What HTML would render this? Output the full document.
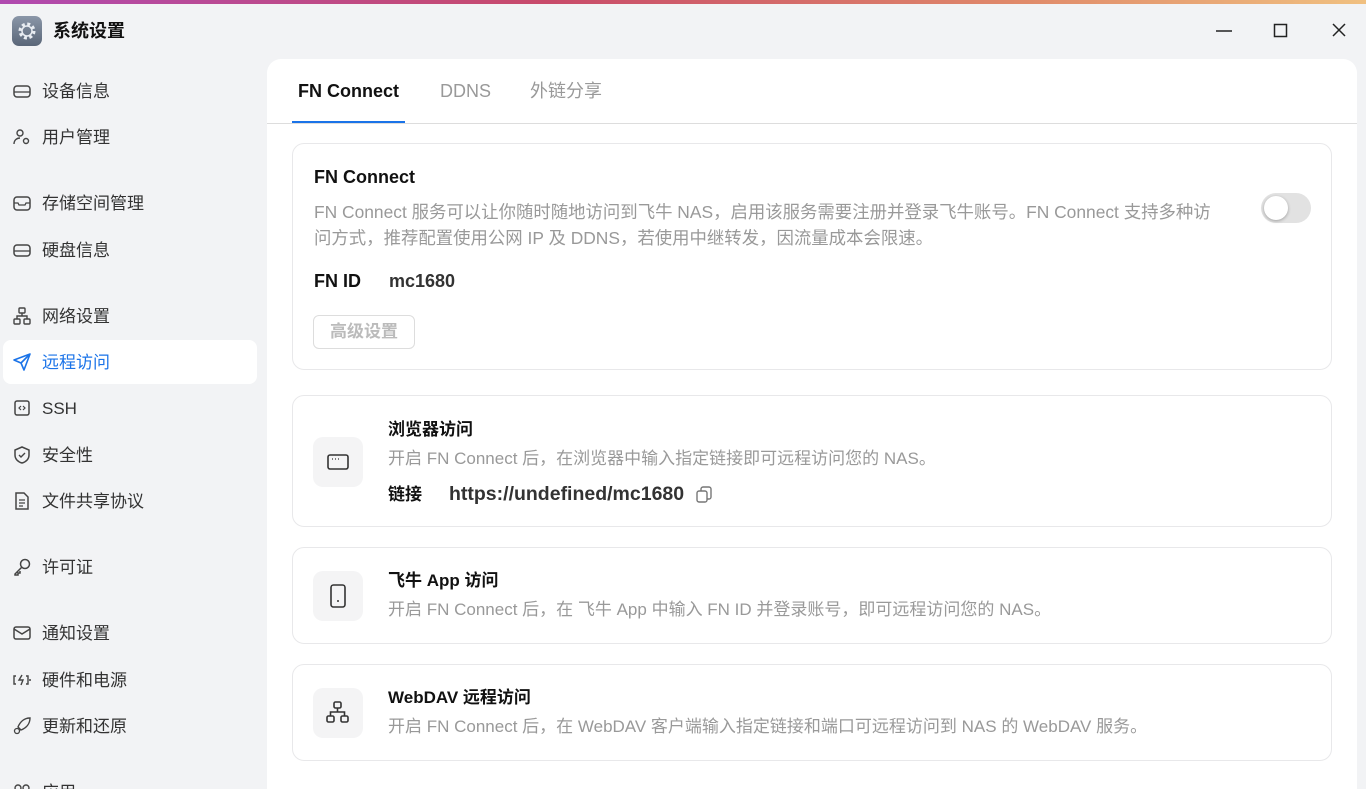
<!DOCTYPE html>
<html><head><meta charset="utf-8"><style>
*{margin:0;padding:0;box-sizing:border-box}
html,body{width:1366px;height:789px;overflow:hidden}
body{background:#f2f3f5;font-family:"Liberation Sans","Noto Sans CJK SC",sans-serif;position:relative;color:#222;line-height:22px}
.top{position:absolute;left:0;top:0;width:1366px;height:4px;background:linear-gradient(90deg,#b04ab0,#c84a6a 40%,#e08a6a 75%,#f0c080)}
.logo{position:absolute;left:12px;top:16px;width:30px;height:30px;border-radius:7px;background:linear-gradient(#8a96a8,#5a6678)}
.title{position:absolute;left:53px;top:20px;font-size:18px;font-weight:bold;color:#111}
.wc{position:absolute;top:22px}
.item{position:absolute;left:3px;width:254px;height:44px;display:flex;align-items:center;font-size:17px;color:#333}
.item svg{position:absolute;left:10px}
.item span{position:absolute;left:39px;top:12px}
.item.act{background:#fff;border-radius:8px;color:#1a73e8}
.panel{position:absolute;left:267px;top:59px;width:1090px;height:730px;background:#fff;border-radius:14px 14px 0 0}
.tab{position:absolute;top:80px;font-size:18px;color:#999}
.card{position:absolute;left:292px;width:1040px;border:1px solid #e8e8ea;border-radius:12px;background:#fff}
.ib{position:absolute;left:20px;width:50px;height:50px;border-radius:10px;background:#f4f4f5;display:flex;align-items:center;justify-content:center}
.ct{position:absolute;left:95px;font-size:17px;font-weight:bold;color:#111}
.cd{position:absolute;left:95px;font-size:17px;color:#999;white-space:nowrap}
</style></head><body>
<div class="top"></div>
<div class="logo"><svg width="30" height="30" viewBox="0 0 30 30"><circle cx="15" cy="15" r="7" fill="none" stroke="#e8ecf2" stroke-width="3" stroke-dasharray="3 2.5"/><circle cx="15" cy="15" r="5" fill="none" stroke="#e8ecf2" stroke-width="1.5"/></svg></div>
<div class="title">系统设置</div>
<svg class="wc" style="left:1216px" width="16" height="16"><path d="M0 9h16" stroke="#222" stroke-width="1.5"/></svg>
<svg class="wc" style="left:1273px" width="16" height="16"><rect x="1.5" y="2.5" width="12" height="12" fill="none" stroke="#222" stroke-width="1.5"/></svg>
<svg class="wc" style="left:1331px" width="16" height="16"><path d="M2 2l12 12M14 2L2 14" stroke="#222" stroke-width="1.5"/></svg>

<div class="item" style="top:69px"><svg width="18" height="18"><rect x="1" y="4" width="16" height="11" rx="3" fill="none" stroke="#444" stroke-width="1.5"/><path d="M1 10h16" stroke="#444" stroke-width="1.3"/></svg><span>设备信息</span></div>
<div class="item" style="top:115px"><svg width="18" height="18"><circle cx="7" cy="5" r="3" fill="none" stroke="#444" stroke-width="1.4"/><path d="M1 16c0-4 3-6 6-6" fill="none" stroke="#444" stroke-width="1.4"/><circle cx="13" cy="13" r="2.5" fill="none" stroke="#444" stroke-width="1.4"/></svg><span>用户管理</span></div>
<div class="item" style="top:181px"><svg width="18" height="18"><rect x="1" y="3" width="16" height="13" rx="3" fill="none" stroke="#444" stroke-width="1.5"/><path d="M1 9h4l1 2h6l1-2h4" fill="none" stroke="#444" stroke-width="1.3"/></svg><span>存储空间管理</span></div>
<div class="item" style="top:228px"><svg width="18" height="18"><rect x="1" y="4" width="16" height="11" rx="3" fill="none" stroke="#444" stroke-width="1.5"/><path d="M1 10h16" stroke="#444" stroke-width="1.3"/></svg><span>硬盘信息</span></div>
<div class="item" style="top:294px"><svg width="18" height="18"><rect x="6" y="1" width="6" height="5" rx="1" fill="none" stroke="#444" stroke-width="1.4"/><rect x="1" y="12" width="6" height="5" rx="1" fill="none" stroke="#444" stroke-width="1.4"/><rect x="11" y="12" width="6" height="5" rx="1" fill="none" stroke="#444" stroke-width="1.4"/><path d="M9 6v3M4 12V9h10v3" fill="none" stroke="#444" stroke-width="1.4"/></svg><span>网络设置</span></div>
<div class="item act" style="top:340px"><svg width="18" height="18"><path d="M17 1L1 7l7 3 3 7z M8 10l9-9" fill="none" stroke="#1a73e8" stroke-width="1.6" stroke-linejoin="round"/></svg><span>远程访问</span></div>
<div class="item" style="top:386px"><svg width="18" height="18"><rect x="2" y="2" width="14" height="14" rx="2" fill="none" stroke="#444" stroke-width="1.5"/><path d="M8 7l-2 2 2 2M10 7l2 2-2 2" fill="none" stroke="#444" stroke-width="1.2"/></svg><span>SSH</span></div>
<div class="item" style="top:433px"><svg width="18" height="18"><path d="M9 1l7 3v5c0 4-3 7-7 8-4-1-7-4-7-8V4z" fill="none" stroke="#444" stroke-width="1.5"/><path d="M6 9l2 2 4-4" fill="none" stroke="#444" stroke-width="1.4"/></svg><span>安全性</span></div>
<div class="item" style="top:479px"><svg width="18" height="18"><path d="M3 1h8l4 4v12H3z" fill="none" stroke="#444" stroke-width="1.5"/><path d="M6 8h6M6 11h6M6 14h4" stroke="#444" stroke-width="1.3"/></svg><span>文件共享协议</span></div>
<div class="item" style="top:545px"><svg width="18" height="18"><circle cx="12" cy="6" r="4.5" fill="none" stroke="#444" stroke-width="1.5"/><path d="M9 9l-7 7v1h3v-2h2v-2" fill="none" stroke="#444" stroke-width="1.5"/></svg><span>许可证</span></div>
<div class="item" style="top:611px"><svg width="18" height="18"><rect x="1" y="3" width="16" height="12" rx="2" fill="none" stroke="#444" stroke-width="1.5"/><path d="M1 5l8 5 8-5" fill="none" stroke="#444" stroke-width="1.5"/></svg><span>通知设置</span></div>
<div class="item" style="top:658px"><svg width="18" height="18"><path d="M3 5H1v8h2M13 5h2v8h-2M9 4l-3 5h4l-2 5" fill="none" stroke="#444" stroke-width="1.4"/><circle cx="17" cy="9" r="1" fill="#444"/></svg><span>硬件和电源</span></div>
<div class="item" style="top:704px"><svg width="18" height="18"><path d="M17 1c-6 0-10 4-12 9l3 3c5-2 9-6 9-12z" fill="none" stroke="#444" stroke-width="1.4"/><circle cx="4" cy="14" r="2.5" fill="none" stroke="#444" stroke-width="1.3"/></svg><span>更新和还原</span></div>
<div class="item" style="top:770px"><svg width="18" height="18"><circle cx="5" cy="5" r="3" fill="none" stroke="#444" stroke-width="1.4"/><circle cx="13" cy="5" r="3" fill="none" stroke="#444" stroke-width="1.4"/></svg><span>应用</span></div>

<div class="panel"></div>
<div class="tab" style="left:298px;color:#111;font-weight:bold">FN Connect</div>
<div class="tab" style="left:440px">DDNS</div>
<div class="tab" style="left:530px">外链分享</div>
<div style="position:absolute;left:267px;top:123px;width:1090px;height:1px;background:#ddd"></div>
<div style="position:absolute;left:292px;top:121px;width:113px;height:2px;background:#1a73e8"></div>

<div class="card" style="top:143px;height:227px">
 <div style="position:absolute;left:21px;top:22px;font-size:18px;font-weight:bold;color:#111">FN Connect</div>
 <div style="position:absolute;left:21px;top:55px;width:912px;font-size:17.4px;line-height:26px;color:#999">FN Connect 服务可以让你随时随地访问到飞牛 NAS，启用该服务需要注册并登录飞牛账号。FN Connect 支持多种访问方式，推荐配置使用公网 IP 及 DDNS，若使用中继转发，因流量成本会限速。</div>
 <div style="position:absolute;left:21px;top:126px;font-size:18px;font-weight:bold;color:#111">FN ID</div>
 <div style="position:absolute;left:96px;top:126px;font-size:18px;font-weight:bold;color:#333">mc1680</div>
 <div style="position:absolute;left:20px;top:171px;width:102px;height:34px;border:1px solid #ddd;border-radius:6px;font-size:17px;color:#bbb;text-align:center;line-height:32px;font-weight:bold">高级设置</div>
 <div style="position:absolute;left:968px;top:49px;width:50px;height:30px;border-radius:15px;background:#e2e2e2"><div style="position:absolute;left:3px;top:3px;width:24px;height:24px;border-radius:12px;background:#fff;box-shadow:0 1px 3px rgba(0,0,0,.3)"></div></div>
</div>

<div class="card" style="top:395px;height:132px">
 <div class="ib" style="top:41px"><svg width="22" height="18"><rect x="1" y="2" width="20" height="14" rx="2" fill="none" stroke="#333" stroke-width="1.6"/><path d="M5 6h1M8 6h1M11 6h1" stroke="#333" stroke-width="1.2"/></svg></div>
 <div class="ct" style="top:23px">浏览器访问</div>
 <div class="cd" style="top:52px">开启 FN Connect 后，在浏览器中输入指定链接即可远程访问您的 NAS。</div>
 <div class="ct" style="top:88px">链接</div>
 <div class="ct" style="left:156px;top:87px;color:#333;font-size:19.5px">https://undefined/mc1680</div>
 <svg style="position:absolute;left:403px;top:90px" width="16" height="18"><rect x="1" y="5" width="10" height="11" rx="2" fill="none" stroke="#777" stroke-width="1.4"/><path d="M5 5V3a2 2 0 012-2h6a2 2 0 012 2v8a2 2 0 01-2 2h-2" fill="none" stroke="#777" stroke-width="1.4"/></svg>
</div>

<div class="card" style="top:547px;height:97px">
 <div class="ib" style="top:23px"><svg width="16" height="24"><rect x="1" y="1" width="14" height="22" rx="2.5" fill="none" stroke="#333" stroke-width="1.6"/><circle cx="8" cy="17" r="1" fill="#333"/></svg></div>
 <div class="ct" style="top:22px">飞牛 App 访问</div>
 <div class="cd" style="top:51px">开启 FN Connect 后，在 飞牛 App 中输入 FN ID 并登录账号，即可远程访问您的 NAS。</div>
</div>

<div class="card" style="top:664px;height:97px">
 <div class="ib" style="top:23px"><svg width="24" height="24"><rect x="8" y="1" width="7" height="6" rx="1.5" fill="none" stroke="#333" stroke-width="1.6"/><rect x="1" y="15" width="7" height="6" rx="1.5" fill="none" stroke="#333" stroke-width="1.6"/><rect x="15" y="15" width="7" height="6" rx="1.5" fill="none" stroke="#333" stroke-width="1.6"/><path d="M11.5 7v4M4.5 15v-4h14v4" fill="none" stroke="#333" stroke-width="1.6"/></svg></div>
 <div class="ct" style="top:22px">WebDAV 远程访问</div>
 <div class="cd" style="top:51px">开启 FN Connect 后，在 WebDAV 客户端输入指定链接和端口可远程访问到 NAS 的 WebDAV 服务。</div>
</div>
</body></html>
